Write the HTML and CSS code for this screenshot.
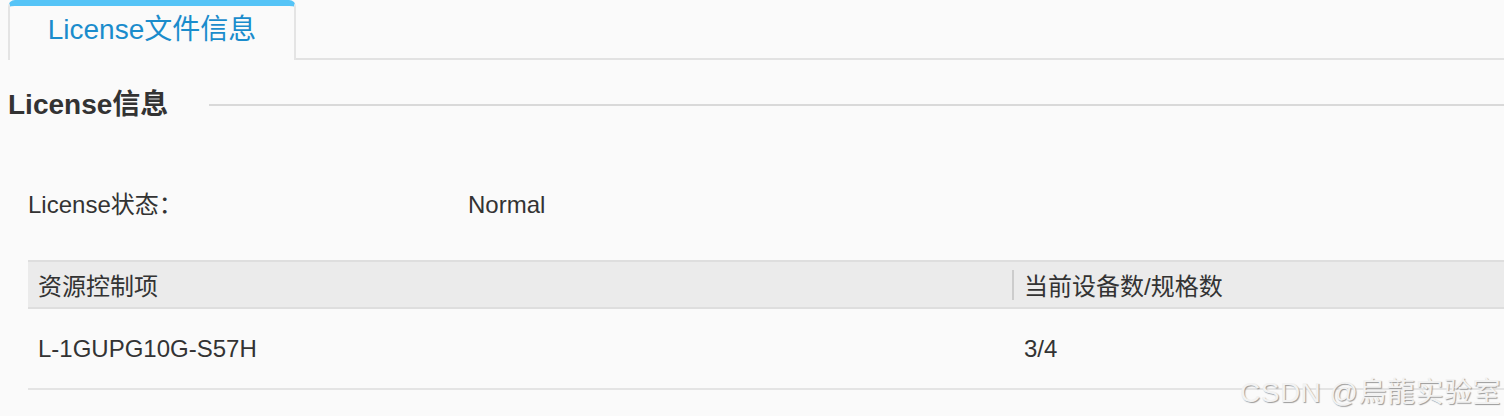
FILE: index.html
```html
<!DOCTYPE html>
<html lang="zh-CN">
<head>
<meta charset="utf-8">
<title>License</title>
<link rel="stylesheet" href="styles.css">
</head>
<body>
<div class="page">
  <div class="tabs">
    <div class="tab active">License文件信息</div>
    <div class="tab-rest"></div>
  </div>

  <div class="section-head">
    <h2 class="section-title">License信息</h2>
    <div class="section-line"></div>
  </div>

  <div class="status-row">
    <div class="status-label">License状态：</div>
    <div class="status-value">Normal</div>
  </div>

  <div class="table">
    <div class="thead">
      <div class="th col-a">资源控制项</div>
      <div class="th col-b"><span class="divider"></span>当前设备数/规格数</div>
    </div>
    <div class="trow">
      <div class="td col-a">L-1GUPG10G-S57H</div>
      <div class="td col-b">3/4</div>
    </div>
  </div>

  <div class="watermark">CSDN @烏龍实验室</div>
</div>
</body>
</html>
```

FILE: styles.css
```css
html, body {
  margin: 0;
  padding: 0;
}
body {
  background: #fafafa;
  font-family: "Liberation Sans", "Noto Sans CJK SC", sans-serif;
  color: #333;
  width: 1504px;
  height: 416px;
  overflow: hidden;
}
.page {
  position: relative;
  height: 416px;
}
.tabs {
  display: flex;
  height: 60px;
  align-items: stretch;
}
.tab {
  margin-left: 8px;
  width: 288px;
  height: 60px;
  box-sizing: border-box;
  border-left: 2px solid #e4e4e4;
  border-right: 2px solid #e4e4e4;
  border-top: 6px solid #55c4f7;
  border-radius: 7px 7px 0 0;
  background: #fafafa;
  color: #1a8ccc;
  font-size: 28px;
  line-height: 48px;
  text-align: center;
  padding-bottom: 6px;
}
.tab-rest {
  flex: 1;
  border-bottom: 2px solid #e2e2e2;
}
.section-head {
  display: flex;
  align-items: center;
  margin-top: 25px;
  padding-left: 8px;
  height: 40px;
}
.section-title {
  margin: 0;
  font-size: 28px;
  font-weight: bold;
  color: #333;
  line-height: 40px;
}
.section-line {
  flex: 1;
  height: 2px;
  background: #d9d9d9;
  margin-left: 41px;
}
.status-row {
  display: flex;
  margin-top: 60px;
  padding-left: 28px;
  height: 40px;
  line-height: 40px;
  font-size: 24px;
}
.status-label {
  width: 440px;
}
.table {
  margin-top: 35px;
  margin-left: 28px;
  font-size: 24px;
}
.thead {
  display: flex;
  height: 45px;
  background: #ebebeb;
  border-top: 2px solid #dedede;
  border-bottom: 2px solid #dedede;
  align-items: center;
}
.col-a {
  width: 984px;
  padding-left: 10px;
  box-sizing: border-box;
}
.col-b {
  flex: 1;
  display: flex;
  align-items: center;
}
.th.col-b {
  height: 100%;
}
.divider {
  width: 2px;
  height: 30px;
  background: #cccccc;
  margin-right: 10px;
}
.trow {
  display: flex;
  height: 79px;
  align-items: center;
  border-bottom: 2px solid #e4e4e4;
}
.td.col-b {
  padding-left: 12px;
}
.watermark {
  position: absolute;
  left: 1240px;
  top: 376px;
  font-size: 28px;
  line-height: 34px;
  letter-spacing: 0.5px;
  color: #f2f2f2;
  text-shadow: 1px 1px 1px #9a9a9a;
  white-space: nowrap;
}
```
